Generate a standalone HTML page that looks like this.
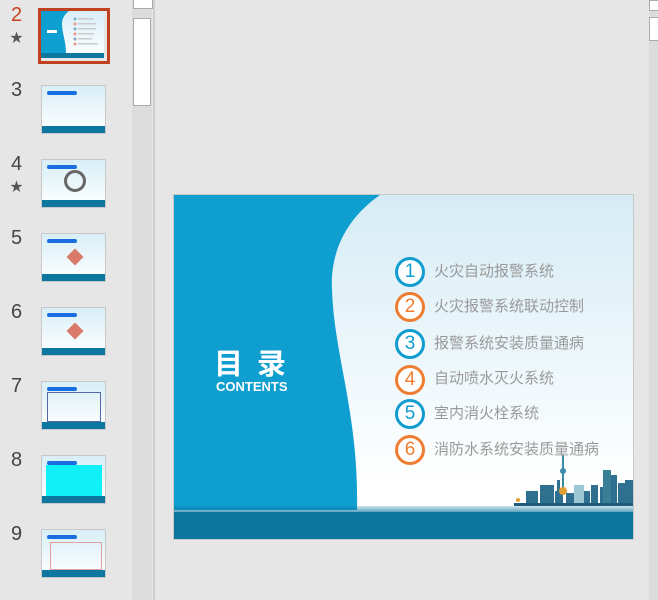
<!DOCTYPE html>
<html><head><meta charset="utf-8"><style>
body{margin:0;width:658px;height:600px;background:#e6e6e6;position:relative;overflow:hidden;font-family:"Liberation Sans","Noto Sans CJK SC",sans-serif}
.n{position:absolute;left:11px;font-size:20px;color:#444}
.st{position:absolute;left:10px;font-size:13px;color:#555}
.th{position:absolute;left:41px;width:63px;height:47px;border:1px solid #c8c8c8;background:linear-gradient(#d8eef7,#fff);overflow:hidden}
.th .b{position:absolute;left:0;right:0;bottom:0;height:7px;background:#0e77a0}
.th .h{position:absolute;left:5px;top:5px;width:30px;height:4px;background:#1a6fe0;border-radius:2px}
.c{position:absolute;left:395px;width:24px;height:24px;border:3px solid #119cd0;border-radius:50%;text-align:center;line-height:24px;font-size:19px;color:#119cd0;background:#fff}
.c.o{border-color:#ef7d31;color:#ef7d31}
.t{position:absolute;left:434px;font-size:15px;color:#9a9a9a;line-height:20px}
</style></head><body>
<div style="position:absolute;left:132px;top:0;width:20px;height:600px;background:#dcdcdc"></div>
<div style="position:absolute;left:133px;top:0;width:18px;height:8px;background:#fff;border:1px solid #aaa;border-top:none"></div>
<div style="position:absolute;left:133px;top:18px;width:18px;height:88px;background:#fff;border:1px solid #aaa;box-sizing:border-box"></div>
<div style="position:absolute;left:153px;top:0;width:2px;height:600px;background:#cfcfcf"></div>
<div style="position:absolute;left:649px;top:0;width:9px;height:600px;background:#dcdcdc"></div>
<div style="position:absolute;left:649px;top:0;width:9px;height:9px;background:#fff;border:1px solid #aaa"></div>
<div style="position:absolute;left:649px;top:17px;width:9px;height:22px;background:#fff;border:1px solid #aaa"></div>

<div class="n" style="top:4px;color:#c9401f">2</div><div class="st" style="top:27px">★</div>
<div style="position:absolute;left:38px;top:8px;width:66px;height:50px;border:3px solid #c0401f"></div>
<div class="th" style="top:11px;left:41px;width:63px;height:47px;border:none">
<svg width="63" height="47" style="position:absolute;left:0;top:0"><path d="M0 0 L28 0 C23 4 21 8 21 13 C21 22 25 30 25 43 L0 43 Z" fill="#0f9ed0"/><rect x="0" y="42" width="63" height="5" fill="#0e77a0"/>
<g fill="#8ac"><circle cx="34" cy="8" r="1.5"/><circle cx="34" cy="13" r="1.5" fill="#e98"/><circle cx="34" cy="18" r="1.5"/><circle cx="34" cy="23" r="1.5" fill="#e98"/><circle cx="34" cy="28" r="1.5"/><circle cx="34" cy="33" r="1.5" fill="#e98"/>
<rect x="37" y="7" width="16" height="1.5" fill="#ccc"/><rect x="37" y="12" width="18" height="1.5" fill="#ccc"/><rect x="37" y="17" width="18" height="1.5" fill="#ccc"/><rect x="37" y="22" width="16" height="1.5" fill="#ccc"/><rect x="37" y="27" width="14" height="1.5" fill="#ccc"/><rect x="37" y="32" width="20" height="1.5" fill="#ccc"/></g>
<rect x="6" y="19" width="10" height="3" fill="#fff"/></svg></div>
<div class="n" style="top:79px">3</div><div class="th" style="top:85px"><div class="h"></div><div class="b"></div></div>
<div class="n" style="top:153px">4</div><div class="st" style="top:176px">★</div><div class="th" style="top:159px"><div class="h"></div><div style="position:absolute;left:22px;top:10px;width:16px;height:16px;border:3px solid #666;border-radius:50%"></div><div class="b"></div></div>
<div class="n" style="top:227px">5</div><div class="th" style="top:233px"><div class="h"></div><div style="position:absolute;left:27px;top:17px;width:12px;height:12px;background:#d97a6a;transform:rotate(45deg)"></div><div class="b"></div></div>
<div class="n" style="top:301px">6</div><div class="th" style="top:307px"><div class="h"></div><div style="position:absolute;left:27px;top:17px;width:12px;height:12px;background:#d97a6a;transform:rotate(45deg)"></div><div class="b"></div></div>
<div class="n" style="top:375px">7</div><div class="th" style="top:381px"><div class="h"></div><div style="position:absolute;left:5px;top:10px;width:52px;height:28px;border:1px solid #5566aa"></div><div class="b"></div></div>
<div class="n" style="top:449px">8</div><div class="th" style="top:455px"><div class="h"></div><div style="position:absolute;left:4px;top:9px;width:56px;height:31px;background:#10f0f8"></div><div class="b"></div></div>
<div class="n" style="top:523px">9</div><div class="th" style="top:529px"><div class="h"></div><div style="position:absolute;left:8px;top:12px;width:50px;height:26px;border:1px solid #e0a0a0"></div><div class="b"></div></div>

<div style="position:absolute;left:173px;top:194px;width:459px;height:344px;border:1px solid #c8c8c8;overflow:hidden;background:linear-gradient(#d6ecf5,#fff 85%)">
<svg width="459" height="344" style="position:absolute;left:0;top:0">
<path d="M0 0 L206 0 C170 25 156 60 158 95 C160 160 185 220 183 315 L0 315 Z" fill="#0f9ed0"/>
<defs><linearGradient id="g" x1="0" y1="0" x2="0" y2="1"><stop offset="0" stop-color="#0e77a0" stop-opacity="0.2"/><stop offset="0.3" stop-color="#0e77a0"/></linearGradient></defs>
<rect x="0" y="311" width="459" height="34" fill="url(#g)"/>
<rect x="0" y="317" width="459" height="28" fill="#0e77a0"/>
<g fill="#2f6f8f">
<rect x="340" y="308" width="121" height="3" fill="#1d5d7a"/>
<rect x="352" y="296" width="12" height="12"/><rect x="366" y="290" width="14" height="18"/><rect x="381" y="296" width="8" height="12"/><rect x="383" y="285" width="3" height="11"/>
<rect x="388" y="260" width="2" height="40" fill="#3a8aaa"/><circle cx="389" cy="276" r="3" fill="#3a8aaa"/><circle cx="389" cy="296" r="4" fill="#e0a030"/>
<rect x="392" y="298" width="14" height="10"/><rect x="400" y="290" width="10" height="18" fill="#9cc8d6"/><rect x="410" y="296" width="6" height="12"/>
<rect x="417" y="290" width="7" height="18"/><rect x="426" y="292" width="9" height="16"/><rect x="429" y="275" width="8" height="33" fill="#3a7f98"/><rect x="437" y="280" width="6" height="28"/><rect x="444" y="288" width="8" height="20"/><rect x="451" y="285" width="8" height="23"/>
<circle cx="344" cy="305" r="2" fill="#e0a030"/>
</g>
</svg>
<div style="position:absolute;left:40px;top:146px;color:#fff;font-size:29px;font-weight:bold;letter-spacing:14px;font-family:'Noto Sans CJK SC',sans-serif">目录</div>
<div style="position:absolute;left:42px;top:184px;color:#fff;font-size:13px;font-weight:bold">CONTENTS</div>
</div>

<div class="c" style="top:257px">1</div><div class="t" style="top:262px">火灾自动报警系统</div>
<div class="c o" style="top:292px">2</div><div class="t" style="top:297px">火灾报警系统联动控制</div>
<div class="c" style="top:329px">3</div><div class="t" style="top:334px">报警系统安装质量通病</div>
<div class="c o" style="top:365px">4</div><div class="t" style="top:369px">自动喷水灭火系统</div>
<div class="c" style="top:399px">5</div><div class="t" style="top:404px">室内消火栓系统</div>
<div class="c o" style="top:435px">6</div><div class="t" style="top:440px">消防水系统安装质量通病</div>
</body></html>
